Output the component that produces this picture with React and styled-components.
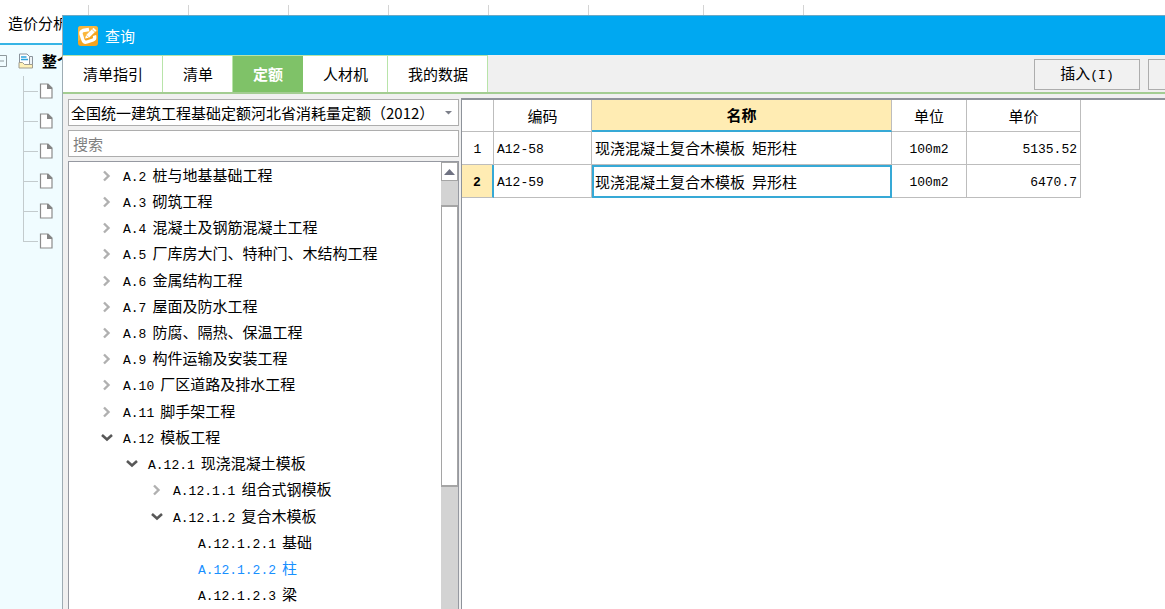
import React, { useState } from "react";
import styled, { createGlobalStyle } from "styled-components";

const GlobalStyle = createGlobalStyle`
  * {
    box-sizing: border-box;
  }
  body {
    margin: 0;
    background: #fff;
    color: #000;
    font-family: "Noto Sans CJK SC", sans-serif;
    font-size: 15px;
    line-height: 20px;
  }
  button, input, select {
    font: inherit;
    color: inherit;
  }
`;

const Page = styled.div`
  position: relative;
  display: flex;
  flex-direction: column;
  height: 100vh;
  overflow: hidden;
`;

/* main window behind the dialog */
const Strip = styled.nav`
  display: flex;
  flex: none;
  height: 45px;
  padding-top: 5px;
  border-bottom: 2px solid #36b4e5;
`;
const StripCell = styled.div`
  flex: none;
  width: ${(p) => p.$width}px;
  padding: 8px 0 0 8px;
  border-right: 1px solid #d4d4d4;
`;
const StripLink = styled.a`
  color: #000;
  text-decoration: none;
  white-space: nowrap;
`;
const Project = styled.aside`
  flex: 1;
  padding-top: 1px;
  background: #f0fcff;
`;
const Root = styled.div`
  display: flex;
  align-items: center;
  height: 30px;
  gap: 8px;
  font-weight: bold;
`;
const Leaves = styled.ul`
  margin: 0;
  padding: 0 0 0 23px;
  list-style: none;
`;
const Leaf = styled.li`
  display: flex;
  align-items: center;
  height: 30px;
  gap: 1px;
`;
const Branch = styled.span`
  display: flex;
  flex-direction: column;
  width: 15px;
  height: 30px;
  &::before {
    content: "";
    height: 16px;
    border-left: 1px solid #c3cbcd;
    border-bottom: 1px solid #c3cbcd;
  }
  &::after {
    content: "";
    height: 14px;
    border-left: 1px solid ${(p) => (p.$last ? "transparent" : "#c3cbcd")};
  }
`;

const Dialog = styled.section`
  position: absolute;
  top: 15px;
  right: 0;
  bottom: 0;
  left: 62px;
  display: flex;
  flex-direction: column;
  background: #f0f0f0;
  border-top: 1px solid #6aa9c6;
  border-left: 1px solid #9eacb3;
`;
const Title = styled.header`
  display: flex;
  flex: none;
  align-items: center;
  gap: 7px;
  height: 39px;
  padding-left: 15px;
  background: #00a8f1;
  color: #fff;
`;
const TitleText = styled.h1`
  margin: 0;
  font-size: 15px;
  font-weight: normal;
`;
const Toolbar = styled.div`
  display: flex;
  flex: none;
  justify-content: space-between;
  height: 39px;
  border-bottom: 2px solid #a3cd92;
`;
const Tabs = styled.div`
  display: flex;
`;
const Tab = styled.button`
  padding: 0 ${(p) => (p.$active ? 20 : 19)}px 0 20px;
  background: ${(p) => (p.$active ? "#7fc268" : "#fff")};
  border: 0;
  border-top: 1px solid #b8e4a9;
  border-right: ${(p) => (p.$active ? "0" : "1px solid #b8e4a9")};
  color: ${(p) => (p.$active ? "#fff" : "#000")};
  font-weight: ${(p) => (p.$active ? "bold" : "normal")};
`;
const Actions = styled.div`
  display: flex;
  gap: 8px;
  padding-top: 4px;
`;
const Action = styled.button`
  width: 106px;
  height: 31px;
  padding: 0;
  background: #f1f1f1;
  border: 1px solid #adadad;
`;
const Shortcut = styled.span`
  font-family: "Liberation Mono", monospace;
  font-size: 13px;
`;
const CutAction = styled(Action)`
  width: 17px;
  border-right: 0;
`;

const Body = styled.div`
  display: flex;
  flex: 1;
  min-height: 0;
  gap: 2px;
  padding: 4px 0 0 5px;
`;
const Side = styled.div`
  display: flex;
  flex: none;
  flex-direction: column;
  gap: 4px;
  width: 391px;
  padding-top: 1px;
`;
const Combo = styled.div`
  display: flex;
  align-items: center;
  height: 27px;
  padding-right: 6px;
  background: #fff;
  border: 1px solid #adadad;
`;
const ComboSelect = styled.select`
  flex: 1;
  min-width: 0;
  height: 25px;
  padding: 0 0 0 2px;
  appearance: none;
  background: transparent;
  border: 0;
`;
const Search = styled.input`
  height: 27px;
  padding: 0 4px;
  background: #fff;
  border: 1px solid #adadad;
  border-radius: 0;
  &::placeholder {
    color: #808080;
    opacity: 1;
  }
`;
const TreeBox = styled.div`
  display: flex;
  flex: 1;
  min-height: 0;
  background: #fff;
  border: 1px solid #9699a1;
  border-bottom: 0;
`;
const Tree = styled.ul`
  display: flex;
  flex: 1;
  flex-direction: column;
  margin: 0;
  padding: 1px 0 0;
  list-style: none;
`;
const Node = styled.li`
  display: flex;
  flex: 1 0 26px;
  align-items: center;
  padding-left: ${(p) => 32 + p.$level * 25}px;
  color: ${(p) => (p.$selected ? "#1890ff" : "#000")};
  white-space: nowrap;
`;
const Toggle = styled.span`
  display: flex;
  width: 22px;
`;
const Label = styled.span`
  display: flex;
  align-items: baseline;
  gap: 6px;
`;
const Code = styled.span`
  font-family: "Liberation Mono", monospace;
  font-size: 13px;
`;
const Scrollbar = styled.div`
  display: flex;
  flex-direction: column;
  width: 17px;
  background: #d3d3d3;
`;
const ScrollUp = styled.button`
  display: flex;
  flex: none;
  align-items: center;
  justify-content: center;
  height: 19px;
  margin-bottom: 24px;
  padding: 0;
  background: #fff;
  border: 1px solid #a5a5a5;
`;
const Thumb = styled.div`
  height: 63%;
  background: #fff;
  border: 1px solid #a5a5a5;
  border-top-width: 2px;
  border-bottom-width: 2px;
`;

const Results = styled.div`
  flex: 1;
  min-width: 0;
  background: #fff;
  border-top: 2px solid #8e939a;
  border-left: 1px solid #8e939a;
`;
const Table = styled.table`
  width: 619px;
  border-collapse: separate;
  border-spacing: 0;
  table-layout: fixed;
`;
const Th = styled.th`
  height: 32px;
  padding: 0;
  background: ${(p) => (p.$active ? "#ffecb3" : "#fff")};
  border-right: 1px solid #bdbdbd;
  border-bottom: ${(p) => (p.$active ? "2px solid #36a9d6" : "1px solid #bdbdbd")};
  font-weight: ${(p) => (p.$active ? "bold" : "normal")};
`;
const Td = styled.td`
  height: 33px;
  padding: 3px 3px 0;
  border-right: 1px solid #bdbdbd;
  border-bottom: 1px solid #bdbdbd;
  font-family: "Liberation Mono", monospace;
  font-size: 13px;
  text-align: ${(p) => p.$align || "left"};
  white-space: nowrap;
`;
const NumberCell = styled(Td)`
  padding: 3px 0 0;
  background: ${(p) => (p.$active ? "#ffecb3" : "#fff")};
  border-right: ${(p) => (p.$active ? "2px solid #36a9d6" : "1px solid #bdbdbd")};
  font-weight: ${(p) => (p.$active ? "bold" : "normal")};
  text-align: center;
`;
const NameCell = styled(Td)`
  padding: 0 ${(p) => (p.$active ? 1 : 3)}px;
  border: ${(p) => (p.$active ? "2px solid #36a9d6" : "")};
  font-family: "Noto Sans CJK SC", sans-serif;
  font-size: 15px;
`;
const NameParts = styled.div`
  display: flex;
  gap: 7px;
`;

const stripWidths = [89, 100, 100, 100, 100, 100, 115, 100];
const tabs = ["清单指引", "清单", "定额", "人材机", "我的数据"];

const nodes = [
  { code: "A.2", name: "桩与地基基础工程", level: 0 },
  { code: "A.3", name: "砌筑工程", level: 0 },
  { code: "A.4", name: "混凝土及钢筋混凝土工程", level: 0 },
  { code: "A.5", name: "厂库房大门、特种门、木结构工程", level: 0 },
  { code: "A.6", name: "金属结构工程", level: 0 },
  { code: "A.7", name: "屋面及防水工程", level: 0 },
  { code: "A.8", name: "防腐、隔热、保温工程", level: 0 },
  { code: "A.9", name: "构件运输及安装工程", level: 0 },
  { code: "A.10", name: "厂区道路及排水工程", level: 0 },
  { code: "A.11", name: "脚手架工程", level: 0 },
  { code: "A.12", name: "模板工程", level: 0, open: true },
  { code: "A.12.1", name: "现浇混凝土模板", level: 1, open: true },
  { code: "A.12.1.1", name: "组合式钢模板", level: 2 },
  { code: "A.12.1.2", name: "复合木模板", level: 2, open: true },
  { code: "A.12.1.2.1", name: "基础", level: 3, leaf: true },
  { code: "A.12.1.2.2", name: "柱", level: 3, leaf: true },
  { code: "A.12.1.2.3", name: "梁", level: 3, leaf: true },
];

const rows = [
  { code: "A12-58", name: "现浇混凝土复合木模板", shape: "矩形柱", unit: "100m2", price: "5135.52" },
  { code: "A12-59", name: "现浇混凝土复合木模板", shape: "异形柱", unit: "100m2", price: "6470.7" },
];

const Chevron = ({ open }) => (
  <svg width="13" height="13" viewBox="0 0 13 13" fill="none">
    {open ? (
      <path d="M1 3 6 7.5 11 3" stroke="#585858" strokeWidth="2.6" />
    ) : (
      <path d="M3 1.5 7.5 6 3 10.5" stroke="#b0b0b0" strokeWidth="2.4" />
    )}
  </svg>
);

const PageIcon = () => (
  <svg width="14" height="16" viewBox="0 0 14 16">
    <path d="M1.5 1H9L13 5V15H1.5Z" fill="#fff" stroke="#8c8c8c" strokeWidth="1.2" />
    <path d="M8 1H9L13 5V6H8Z" fill="#858585" />
  </svg>
);

const ProjectIcon = () => (
  <svg width="16" height="16" viewBox="0 0 16 16">
    <path d="M10 3.5H14.5V14H10" fill="#eef3f6" stroke="#8b949c" />
    <path d="M1.5 1H9L11.5 3.5V12H1.5Z" fill="#fff" stroke="#8b949c" />
    <path d="M3 4H8.5M3 6.5H10" stroke="#2ca3dd" strokeWidth="1.4" />
    <path d="M1 9.5H4.5L6.5 11.5H14.5V15H1Z" fill="#fff2b8" stroke="#a09d90" />
  </svg>
);

const AppIcon = () => (
  <svg width="20" height="20" viewBox="0 0 20 20">
    <rect width="20" height="20" rx="3" fill="#f6a41f" />
    <path d="M0 3Q0 0 3 0H17Q20 0 20 3V5L0 15Z" fill="#fab63c" />
    <path
      d="M11 3.5 5 4.5Q2.5 5.5 3 8L5 14Q6 17 9 16L15 14Q17.5 13 16.5 9.5"
      fill="none"
      stroke="#fff"
      strokeWidth="3.4"
    />
    <path d="M7 12.5 8.2 9 15.5 1.8 18.5 4.6 11 11.8Z" fill="#fff" />
    <path d="M8.2 9 11 11.8M14 3.4 17 6.2" stroke="#f9bb55" strokeWidth=".8" />
  </svg>
);

const App = () => {
  const [tab, setTab] = useState("定额");
  const [selected, setSelected] = useState("A.12.1.2.2");
  const [row, setRow] = useState(1);

  return (
    <Page>
      <GlobalStyle />
      <Strip>
        {stripWidths.map((width, i) => (
          <StripCell key={i} $width={width}>
            {i === 0 && <StripLink href="#analysis">造价分析</StripLink>}
          </StripCell>
        ))}
      </Strip>
      <Project>
        <Root>
          <svg width="10" height="14" viewBox="0 0 10 14">
            <path d="M-5 1.5H6.5V12.5H-5M0 7H4" fill="none" stroke="#8f999d" />
          </svg>
          <ProjectIcon />
          整个
        </Root>
        <Leaves>
          {[1, 2, 3, 4, 5, 6].map((n) => (
            <Leaf key={n}>
              <Branch $last={n === 6} />
              <PageIcon />
            </Leaf>
          ))}
        </Leaves>
      </Project>

      <Dialog role="dialog" aria-label="查询">
        <Title>
          <AppIcon />
          <TitleText>查询</TitleText>
        </Title>
        <Toolbar>
          <Tabs role="tablist">
            {tabs.map((name) => (
              <Tab
                key={name}
                role="tab"
                aria-selected={tab === name}
                $active={tab === name}
                onClick={() => setTab(name)}
              >
                {name}
              </Tab>
            ))}
          </Tabs>
          <Actions>
            <Action>
              插入<Shortcut>(I)</Shortcut>
            </Action>
            <CutAction aria-label="替换" />
          </Actions>
        </Toolbar>

        <Body>
          <Side>
            <Combo>
              <ComboSelect aria-label="定额库">
                <option>全国统一建筑工程基础定额河北省消耗量定额（2012）</option>
              </ComboSelect>
              <svg width="7" height="5" viewBox="0 0 7 5">
                <path d="M0 1H7L3.5 4.5Z" fill="#7c7f89" />
              </svg>
            </Combo>
            <Search type="text" placeholder="搜索" aria-label="搜索" />
            <TreeBox>
              <Tree role="tree">
                {nodes.map((node) => (
                  <Node
                    key={node.code}
                    role="treeitem"
                    aria-selected={selected === node.code}
                    $level={node.level}
                    $selected={selected === node.code}
                    onClick={() => setSelected(node.code)}
                  >
                    <Toggle>{!node.leaf && <Chevron open={node.open} />}</Toggle>
                    <Label>
                      <Code>{node.code}</Code>
                      {node.name}
                    </Label>
                  </Node>
                ))}
              </Tree>
              <Scrollbar>
                <ScrollUp aria-label="向上滚动">
                  <svg width="11" height="6" viewBox="0 0 11 6">
                    <path d="M0 6 5.5 0 11 6Z" fill="#6f7282" />
                  </svg>
                </ScrollUp>
                <Thumb />
              </Scrollbar>
            </TreeBox>
          </Side>

          <Results>
            <Table>
              <colgroup>
                <col width="32" />
                <col width="98" />
                <col width="300" />
                <col width="75" />
                <col width="114" />
              </colgroup>
              <thead>
                <tr>
                  <Th aria-label="序号" />
                  <Th>编码</Th>
                  <Th $active>名称</Th>
                  <Th>单位</Th>
                  <Th>单价</Th>
                </tr>
              </thead>
              <tbody>
                {rows.map((item, i) => (
                  <tr key={item.code} onClick={() => setRow(i)}>
                    <NumberCell $active={row === i}>{i + 1}</NumberCell>
                    <Td>{item.code}</Td>
                    <NameCell $active={row === i}>
                      <NameParts>
                        <span>{item.name}</span>
                        <span>{item.shape}</span>
                      </NameParts>
                    </NameCell>
                    <Td $align="center">{item.unit}</Td>
                    <Td $align="right">{item.price}</Td>
                  </tr>
                ))}
              </tbody>
            </Table>
          </Results>
        </Body>
      </Dialog>
    </Page>
  );
};

export default App;
